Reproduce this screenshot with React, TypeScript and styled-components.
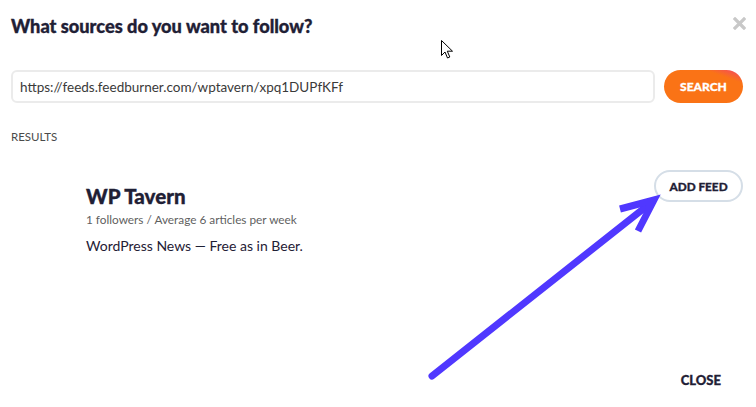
import React from 'react'
import styled, { createGlobalStyle } from 'styled-components'

const GlobalStyle = createGlobalStyle`
  html, body {
    margin: 0;
    padding: 0;
    background: #fff;
  }
  body {
    font-family: Lato, "Open Sans", sans-serif;
    color: #1f2035;
  }
`

const Modal = styled.div`
  position: relative;
  width: 756px;
  height: 407px;
  box-sizing: border-box;
  padding: 14px 10px 0 11px;
  display: flex;
  flex-direction: column;
  overflow: hidden;
`

const Header = styled.div`
  display: flex;
  justify-content: space-between;
  align-items: flex-start;
`

const Title = styled.h2`
  margin: 0;
  font-size: 18.2px;
  line-height: 24px;
  font-weight: 900;
  color: #1f2035;
  -webkit-text-stroke: 0.35px #1f2035;
`

const CloseX = styled.button`
  border: 0;
  background: none;
  padding: 0;
  margin-top: 3px;
  width: 13px;
  height: 13px;
  cursor: pointer;
`

const SearchRow = styled.div`
  display: flex;
  gap: 9px;
  margin-top: 32px;
  padding-right: 3px;
`

const Input = styled.input`
  flex: 1;
  height: 33px;
  box-sizing: border-box;
  border: 2px solid #ebebeb;
  border-radius: 6px;
  padding: 0 7px;
  font-family: Lato, sans-serif;
  font-size: 13.5px;
  color: #3a3a3a;
  outline: none;
`

const PillButton = styled.button<{ $variant: 'primary' | 'outline' }>`
  height: ${({ $variant }) => ($variant === 'primary' ? '33px' : '32px')};
  width: ${({ $variant }) => ($variant === 'primary' ? '79px' : '89px')};
  border-radius: 17px;
  font-family: Lato, sans-serif;
  font-weight: 900;
  font-size: ${({ $variant }) => ($variant === 'primary' ? '12px' : '11.8px')};
  letter-spacing: 0;
  cursor: pointer;
  border: ${({ $variant }) => ($variant === 'primary' ? '0' : '2px solid #d5dee7')};
  background: ${({ $variant }) =>
    $variant === 'primary' ? 'linear-gradient(200deg, #f2416f 0%, #fa7316 22%, #fa7316 100%)' : '#fff'};
  color: ${({ $variant }) => ($variant === 'primary' ? '#fff' : '#1f2035')};
  -webkit-text-stroke: 0.3px currentColor;
`

const SectionLabel = styled.div`
  margin-top: 27px;
  font-size: 11.5px;
  line-height: 14px;
  color: #4a4a4a;
  text-transform: uppercase;
`

const Result = styled.div`
  display: grid;
  grid-template-columns: 75px 1fr auto;
  margin-top: 26px;
  padding-right: 3px;
`

const FeedInfo = styled.div`
  display: flex;
  flex-direction: column;
  padding-top: 14px;
`

const FeedName = styled.div`
  font-size: 20.5px;
  line-height: 24px;
  font-weight: 900;
  color: #1f2035;
  -webkit-text-stroke: 0.35px #1f2035;
`

const FeedMeta = styled.div`
  margin-top: 4px;
  font-size: 11.8px;
  line-height: 16px;
  color: #5f5f5f;
`

const FeedDesc = styled.div`
  margin-top: 9px;
  font-size: 14px;
  line-height: 18px;
  color: #1f2035;
`

const Footer = styled.div`
  margin-top: auto;
  display: flex;
  justify-content: flex-end;
  padding: 0 25px 19px 0;
`

const TextButton = styled.button`
  border: 0;
  background: none;
  padding: 0;
  font-family: Lato, sans-serif;
  font-weight: 900;
  font-size: 13px;
  color: #1f2035;
  cursor: pointer;
  -webkit-text-stroke: 0.3px #1f2035;
`

const Overlay = styled.svg`
  position: absolute;
  left: 0;
  top: 0;
  pointer-events: none;
`

const Cursor = styled.svg`
  position: absolute;
  left: 441px;
  top: 40px;
`

export default function App() {
  return (
    <>
      <GlobalStyle />
      <Modal>
        <Header>
          <Title>What sources do you want to follow?</Title>
          <CloseX aria-label="close">
            <svg width="13" height="13" viewBox="0 0 13 13">
              <path d="M2 2 L11 11 M11 2 L2 11" stroke="#c8c8c8" strokeWidth="3.2" strokeLinecap="square" />
            </svg>
          </CloseX>
        </Header>
        <SearchRow>
          <Input defaultValue="https://feeds.feedburner.com/wptavern/xpq1DUPfKFf" />
          <PillButton $variant="primary">SEARCH</PillButton>
        </SearchRow>
        <SectionLabel>Results</SectionLabel>
        <Result>
          <div />
          <FeedInfo>
            <FeedName>WP Tavern</FeedName>
            <FeedMeta>1 followers / Average 6 articles per week</FeedMeta>
            <FeedDesc>WordPress News — Free as in Beer.</FeedDesc>
          </FeedInfo>
          <PillButton $variant="outline">ADD FEED</PillButton>
        </Result>
        <Footer>
          <TextButton>CLOSE</TextButton>
        </Footer>
        <Overlay width="756" height="407" viewBox="0 0 756 407">
          <g stroke="#5038ff" strokeWidth="7" fill="none">
            <path d="M432 376 L652 202" strokeLinecap="round" />
            <path d="M620 209 L654 200 L638 231" strokeLinejoin="miter" strokeLinecap="butt" />
          </g>
        </Overlay>
        <Cursor width="13" height="19" viewBox="0 0 13 19">
          <path
            d="M0.5 0.5 L0.5 15.5 L4 12 L6.5 18 L8.8 17 L6.3 11.2 L11.5 11.2 Z"
            fill="#fff"
            stroke="#000"
            strokeWidth="1"
            strokeLinejoin="miter"
          />
        </Cursor>
      </Modal>
    </>
  )
}
